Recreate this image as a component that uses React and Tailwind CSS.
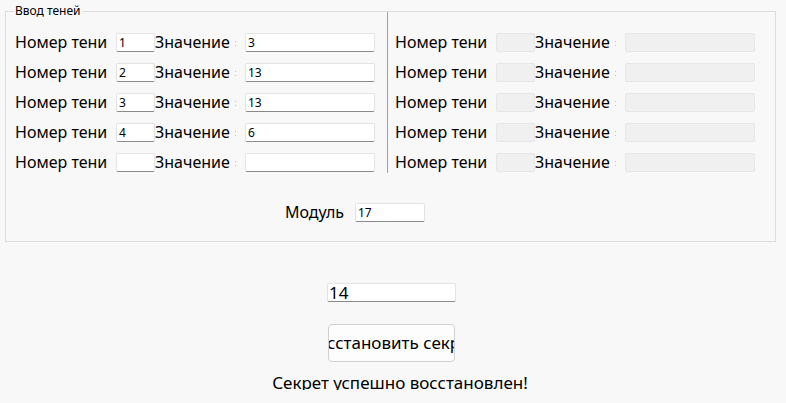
import React from "react";

const font = { fontFamily: '"Noto Sans", "Open Sans", sans-serif' };

function Row({ num, val, disabled }) {
  const inputCls = disabled
    ? "h-[19px] bg-[#f0f0f0] border border-[#e6e6e6] rounded-[2px]"
    : "h-[19px] bg-white border border-[#e3e3e3] border-b-[#8a8a8a] rounded-[2px] text-[12px] leading-[17px] pl-[2px] text-black";
  return (
    <div className="flex items-center h-[20px] mb-[10px] text-[16px] text-black">
      <div className="w-[101px] whitespace-nowrap leading-[20px]">Номер тени</div>
      <div className={"w-[39px] " + inputCls}>{num}</div>
      <div className="w-[80px] whitespace-nowrap leading-[20px]">Значение</div>
      <div className="w-[10px] flex flex-col items-start pt-[3px] gap-[3px]">
        <span className="w-px h-px bg-[#f2b47a]" />
        <span className="w-px h-px bg-[#f2b47a]" />
      </div>
      <div className={"w-[130px] " + inputCls}>{val}</div>
    </div>
  );
}

export default function App() {
  const left = [
    ["1", "3"],
    ["2", "13"],
    ["3", "13"],
    ["4", "6"],
    ["", ""],
  ];
  return (
    <div className="w-[786px] h-[403px] bg-[#f8f8f8] overflow-hidden" style={font}>
      <div className="pt-[11px] px-[5px]">
        <div className="relative border border-[#dcdcdc] h-[231px] w-[771px]">
          <div className="absolute left-[8px] top-[-9px] bg-[#f8f8f8] px-[1px] text-[12px] leading-[15px] text-black">
            Ввод теней
          </div>
          <div className="flex pl-[9px]">
            <div className="w-[372px] pt-[20px]">
              {left.map((r, i) => (
                <Row key={i} num={r[0]} val={r[1]} />
              ))}
            </div>
            <div className="w-px h-[161px] bg-[#a0a0a0]" />
            <div className="pl-[7px] pt-[20px]">
              {[0, 1, 2, 3, 4].map((i) => (
                <Row key={i} num="" val="" disabled />
              ))}
            </div>
          </div>
          <div className="flex items-center mt-[20px] pl-[279px] h-[20px] text-[16px] text-black">
            <div className="w-[70px] leading-[20px]">Модуль</div>
            <div className="w-[70px] h-[19px] bg-white border border-[#e3e3e3] border-b-[#8a8a8a] rounded-[2px] text-[12px] leading-[17px] pl-[2px]">
              17
            </div>
          </div>
        </div>
      </div>
      <div className="flex flex-col items-center">
        <div className="mt-[41px] ml-[-3px] w-[129px] h-[19px] bg-white border border-[#e3e3e3] border-b-[#8a8a8a] rounded-[2px] text-[17px] leading-[17px] pl-[1px] text-black">
          14
        </div>
        <div className="mt-[22px] ml-[-3px] w-[127px] h-[38px] bg-[#fdfdfd] border border-[#d0d0d0] rounded-[4px] flex items-center justify-center overflow-hidden text-[17px] text-black">
          <span className="whitespace-nowrap shrink-0">Восстановить секрет</span>
        </div>
        <div className="mt-[12px] ml-[14px] h-[16px] overflow-hidden text-[17px] leading-[17px] text-black whitespace-nowrap">
          Секрет успешно восстановлен!
        </div>
      </div>
    </div>
  );
}
